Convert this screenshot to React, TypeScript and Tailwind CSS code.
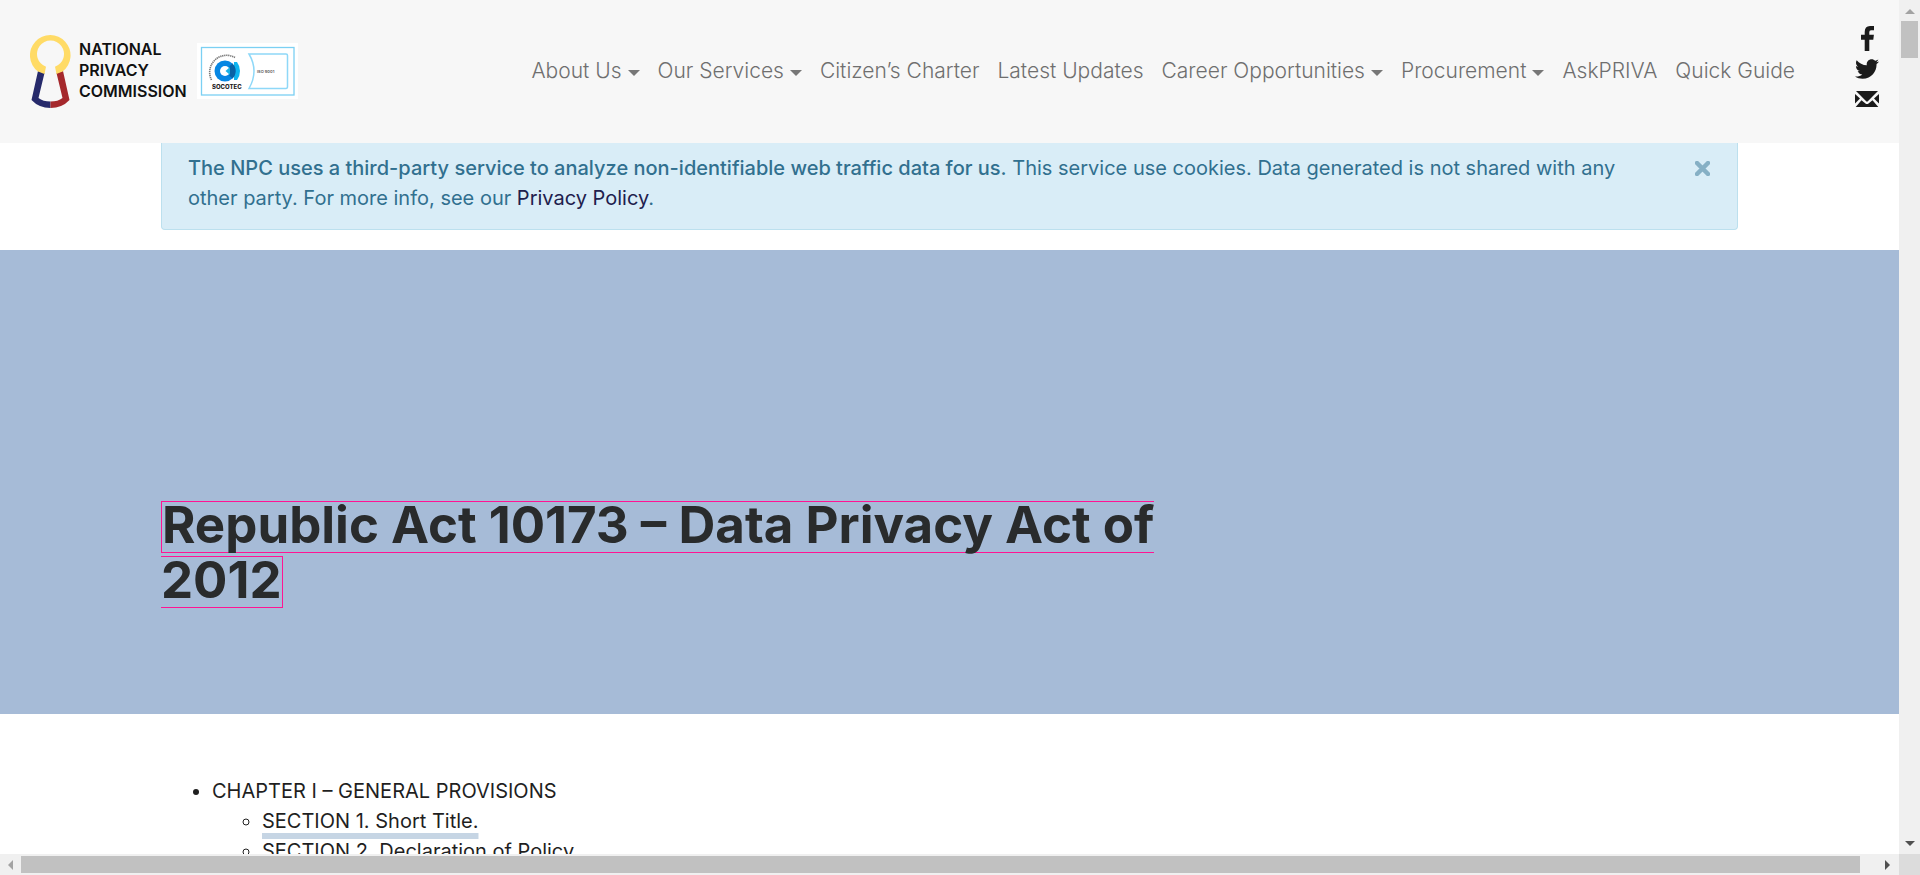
import React from "react";
import { FaTwitter } from "react-icons/fa";

const navItems = [
  { label: "About Us", menu: true },
  { label: "Our Services", menu: true },
  { label: "Citizen’s Charter", menu: false },
  { label: "Latest Updates", menu: false },
  { label: "Career Opportunities", menu: true },
  { label: "Procurement", menu: true },
  { label: "AskPRIVA", menu: false },
  { label: "Quick Guide", menu: false },
];

function KeyholeLogo() {
  return (
    <svg viewBox="0 0 41 74" className="h-[74px] w-[41px]" aria-hidden="true">
      <path d="M8 37 L1.500 66 Q9 74 20.500 74 V67.500 Q13 67.500 8.500 64 L14.500 39 Z" fill="#262a6b" />
      <path d="M33 37 L39.500 66 Q32 74 20.500 74 V67.500 Q28 67.500 32.500 64 L26.500 39 Z" fill="#a5282c" />
      <path
        d="M8 37.500 A20.300 20.300 0 1 1 32.500 37.500 L26.500 40 L25 32.700 A13.500 13.500 0 1 0 16 32.700 L14.500 40 Z"
        fill="#ffdb66"
      />
    </svg>
  );
}

function CertificateBadge() {
  return (
    <svg viewBox="0 0 101 56" className="h-[56px] w-[101px]" role="img" aria-label="SOCOTEC certificate">
      <rect width="101" height="56" fill="#fff" />
      <rect x="4.500" y="4.500" width="92.500" height="47.500" fill="none" stroke="#7bd0f3" strokeWidth="1.300" />
      <path d="M52 11 H89 Q90.500 11 90.500 12.500 V43.500 Q90.500 45.500 89 45.500 H52 Q62 28 52 11 Z" fill="none" stroke="#8ed8f8" strokeWidth="1.500" />
      <path d="M14.500 37 A17 17 0 0 1 38 14.500" fill="none" stroke="#777" strokeWidth="1.600" strokeDasharray="1.300 .7" />
      <path d="M37 19 H40 Q43 23 43 28 Q43 33 40 37 H37 Z" fill="#0fb4ef" />
      <circle cx="28" cy="28" r="10.500" fill="#0787e3" />
      <path d="M35.500 20.500 A10.500 10.500 0 0 1 35.500 35.500 Q31 32 31 28 Q31 24 35.500 20.500 Z" fill="#0a62a5" />
      <circle cx="28" cy="28" r="5" fill="#fff" />
      <path d="M33 24 V32 L28.500 28 Z" fill="#18b1e8" />
      <text x="15" y="45.500" fontSize="6" fontWeight="800" fill="#222" fontFamily="Inter, sans-serif">SOCOTEC</text>
      <text x="60" y="30" fontSize="4" fontWeight="600" fill="#555" fontFamily="Inter, sans-serif">ISO 9001</text>
    </svg>
  );
}

function Triangle({ points, fill }: { points: string; fill: string }) {
  return (
    <svg viewBox="0 0 10 10" className="size-2.5" aria-hidden="true">
      <polygon points={points} fill={fill} />
    </svg>
  );
}

function Header() {
  return (
    <header className="flex h-[143px] shrink-0 items-center bg-[#f7f7f7] pr-5 pb-0.5 pl-[30px]">
      <a href="#home" className="flex items-center gap-2">
        <KeyholeLogo />
        <span className="text-base leading-[21px] font-semibold text-[#111]">
          NATIONAL
          <br />
          PRIVACY
          <br />
          COMMISSION
        </span>
      </a>
      <a href="#certificate" className="ml-2.5">
        <CertificateBadge />
      </a>
      <nav className="ml-auto">
        <ul className="flex items-center gap-[18px] text-[21px] leading-[30px] font-light text-[#6f6f6f]">
          {navItems.map((item) => (
            <li key={item.label}>
              <a href="#menu" className="flex items-center gap-1.5 whitespace-nowrap">
                {item.label}
                {item.menu && (
                  <svg viewBox="0 0 12 6" className="mt-1 h-1.5 w-3" aria-hidden="true">
                    <polygon points="0,0 12,0 6,6" fill="#777" />
                  </svg>
                )}
              </a>
            </li>
          ))}
        </ul>
      </nav>
      <div className="ml-[60px] flex flex-col items-center gap-1.5 pb-1 text-[#1b1b1b]">
        <a href="#facebook" aria-label="Facebook">
          <svg viewBox="0 0 13 25" className="h-[25px] w-[13px]" fill="currentColor" aria-hidden="true">
            <path d="M8.300 25 H3.700 V13.700 H0 V8.700 H3.700 V6 Q3.700 0 9 0 H13 V4.300 H10 Q8.300 4.300 8.300 6 V8.700 H12.900 L12.300 13.700 H8.300 Z" />
          </svg>
        </a>
        <a href="#twitter" aria-label="Twitter">
          <FaTwitter className="size-6" />
        </a>
        <a href="#mail" aria-label="Email" className="py-1">
          <svg viewBox="0 0 24 16" className="h-4 w-6" fill="currentColor" aria-hidden="true">
            <path d="M1 0 H23 L12.800 10.300 Q12 11 11.200 10.300 Z" />
            <path d="M0 3 L5 7.600 L0 12.500 Z M24 3 L19 7.600 L24 12.500 Z" />
            <path d="M6.500 9.300 L10.500 12.600 Q12 13.600 13.500 12.600 L17.500 9.300 L23.300 16 H.7 Z" />
          </svg>
        </a>
      </div>
    </header>
  );
}

function CookieNotice() {
  return (
    <div role="alert" className="flex items-start justify-between rounded-b border border-t-0 border-[#bce0ee] bg-[#d9edf7] pt-2.5 pr-[27px] pb-4 pl-[26px] text-xl leading-[30px] text-[#31708f]">
      <p className="max-w-[1460px]">
        <strong className="font-medium">
          The NPC uses a third-party service to analyze non-identifiable web traffic data for us.
        </strong>{" "}
        This service use cookies. Data generated is not shared with any other party. For more info, see our{" "}
        <a href="#privacy" className="text-[#20204d]">Privacy Policy</a>.
      </p>
      <button type="button" aria-label="Close" className="mt-2 text-[#86b0c5]">
        <svg viewBox="0 0 15 15" className="size-[15px]" aria-hidden="true">
          <path d="M2 2 L13 13 M13 2 L2 13" stroke="currentColor" strokeWidth="4.500" strokeLinecap="round" />
        </svg>
      </button>
    </div>
  );
}

export default function App() {
  return (
    <div className="grid h-screen grid-cols-[minmax(0,1fr)_21px] grid-rows-[minmax(0,1fr)_21px] bg-white font-['Inter',sans-serif]">
      <div className="flex flex-col overflow-hidden">
        <Header />
        <div className="mx-[161px] mb-5 shrink-0">
          <CookieNotice />
        </div>
        <section className="flex h-[464px] shrink-0 items-end bg-[#a6bbd7] px-[161px] pb-[106px]">
          <h1 className="flex flex-col items-start gap-[3px] text-[51px] leading-[46px] font-bold text-[#292b2c]">
            <span className="border border-r-0 border-[#ff1493] pb-1">Republic Act 10173 – Data Privacy Act of</span>
            <span className="border border-l-0 border-[#ff1493] pb-1">2012</span>
          </h1>
        </section>
        <main className="shrink-0 px-[161px] pt-[62px] text-xl leading-[30px] text-[#1f1f1f]">
          <ul className="list-disc pl-[51px]">
            <li>
              CHAPTER I – GENERAL PROVISIONS
              <ul className="list-[circle] pl-[50px]">
                <li>
                  <a href="#section-1" className="underline decoration-[#c6d5e4] decoration-[6px] underline-offset-[5px]">SECTION 1. Short Title.</a>
                </li>
                <li>
                  <a href="#section-2">SECTION 2. Declaration of Policy.</a>
                </li>
              </ul>
            </li>
          </ul>
        </main>
      </div>
      <div className="flex flex-col items-center justify-between bg-[#f0f0f0] py-1.5" aria-hidden="true">
        <div className="flex flex-col items-center gap-[5px]">
          <Triangle points="0,8 5,3 10,8" fill="#a3a3a3" />
          <div className="h-[37px] w-[17px] bg-[#c1c1c1]" />
        </div>
        <Triangle points="0,3 10,3 5,8" fill="#505050" />
      </div>
      <div className="flex items-center gap-[5px] bg-[#f0f0f0] px-1.5" aria-hidden="true">
        <Triangle points="7,0 2,5 7,10" fill="#a3a3a3" />
        <div className="mr-[18px] h-[17px] flex-1 bg-[#c1c1c1]" />
        <Triangle points="2,0 7,5 2,10" fill="#505050" />
      </div>
      <div className="bg-[#dcdcdc]" />
    </div>
  );
}
